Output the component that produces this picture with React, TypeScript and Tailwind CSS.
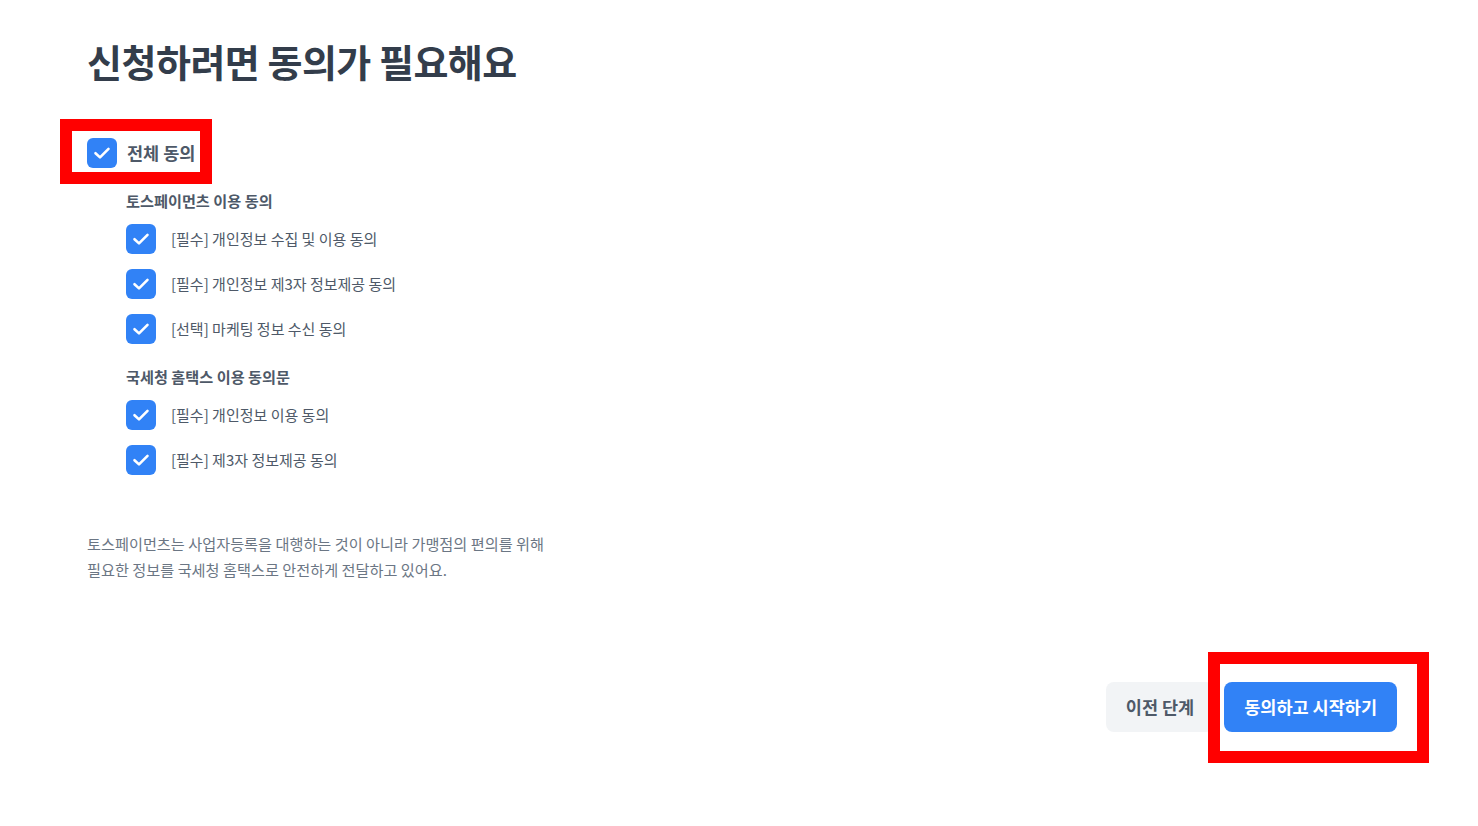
import React from "react";

const font = { fontFamily: '"Noto Sans CJK KR", "Noto Sans", sans-serif' };

function CheckBox() {
  return (
    <span className="flex items-center justify-center rounded-[6px] bg-[#3182f6] w-[30px] h-[30px]">
      <svg width="30" height="30" viewBox="0 0 30 30" fill="none">
        <path
          d="M8.5 15.2L13 19.4L21.5 10.8"
          stroke="white"
          strokeWidth="2.6"
          strokeLinecap="round"
          strokeLinejoin="round"
        />
      </svg>
    </span>
  );
}

function Item({ label }: { label: string }) {
  return (
    <div className="flex items-center h-[30px]">
      <CheckBox />
      <span className="ml-[15px] text-[15px] leading-[24px] text-[#4e5968]">{label}</span>
    </div>
  );
}

const groups = [
  {
    title: "토스페이먼츠 이용 동의",
    items: [
      "[필수] 개인정보 수집 및 이용 동의",
      "[필수] 개인정보 제3자 정보제공 동의",
      "[선택] 마케팅 정보 수신 동의",
    ],
  },
  {
    title: "국세청 홈택스 이용 동의문",
    items: ["[필수] 개인정보 이용 동의", "[필수] 제3자 정보제공 동의"],
  },
];

export default function App() {
  return (
    <div className="min-h-screen bg-white" style={font}>
      <main className="px-[87px] pt-[31px]">
        <h1 className="text-[38px] leading-[60px] font-bold text-[#333d4b] tracking-[-0.5px]">
          신청하려면 동의가 필요해요
        </h1>

        <div className="relative mt-[47px] flex w-fit items-center h-[30px]">
          <CheckBox />
          <span className="ml-[10px] text-[17.5px] leading-[26px] font-bold text-[#4e5968]">
            전체 동의
          </span>
          <div className="absolute left-[-27px] top-[-19px] w-[152px] h-[65px] border-[12px] border-[#ff0000]" />
        </div>

        <div className="ml-[39px]">
          {groups.map((g) => (
            <div key={g.title}>
              <h3 className="mt-[20px] text-[15.2px] leading-[24px] font-bold text-[#4e5968]">
                {g.title}
              </h3>
              <div className="mt-[12px] flex flex-col gap-[15px]">
                {g.items.map((it) => (
                  <Item key={it} label={it} />
                ))}
              </div>
            </div>
          ))}
        </div>

        <p className="mt-[55px] text-[15.2px] leading-[26px] text-[#6b7684]">
          토스페이먼츠는 사업자등록을 대행하는 것이 아니라 가맹점의 편의를 위해
          <br />
          필요한 정보를 국세청 홈택스로 안전하게 전달하고 있어요.
        </p>
      </main>

      <div className="mt-[100px] flex justify-end gap-[10px] pr-[81px]">
        <button className="h-[50px] px-[20px] rounded-[8px] bg-[#f2f4f6] text-[17.5px] font-bold text-[#4e5968]">
          이전 단계
        </button>
        <div className="relative">
          <button className="h-[50px] px-[20px] rounded-[8px] bg-[#3182f6] text-[17.5px] font-bold text-white">
            동의하고 시작하기
          </button>
          <div className="absolute left-[-16px] top-[-30px] w-[221px] h-[111px] border-[12px] border-[#ff0000]" />
        </div>
      </div>
    </div>
  );
}
